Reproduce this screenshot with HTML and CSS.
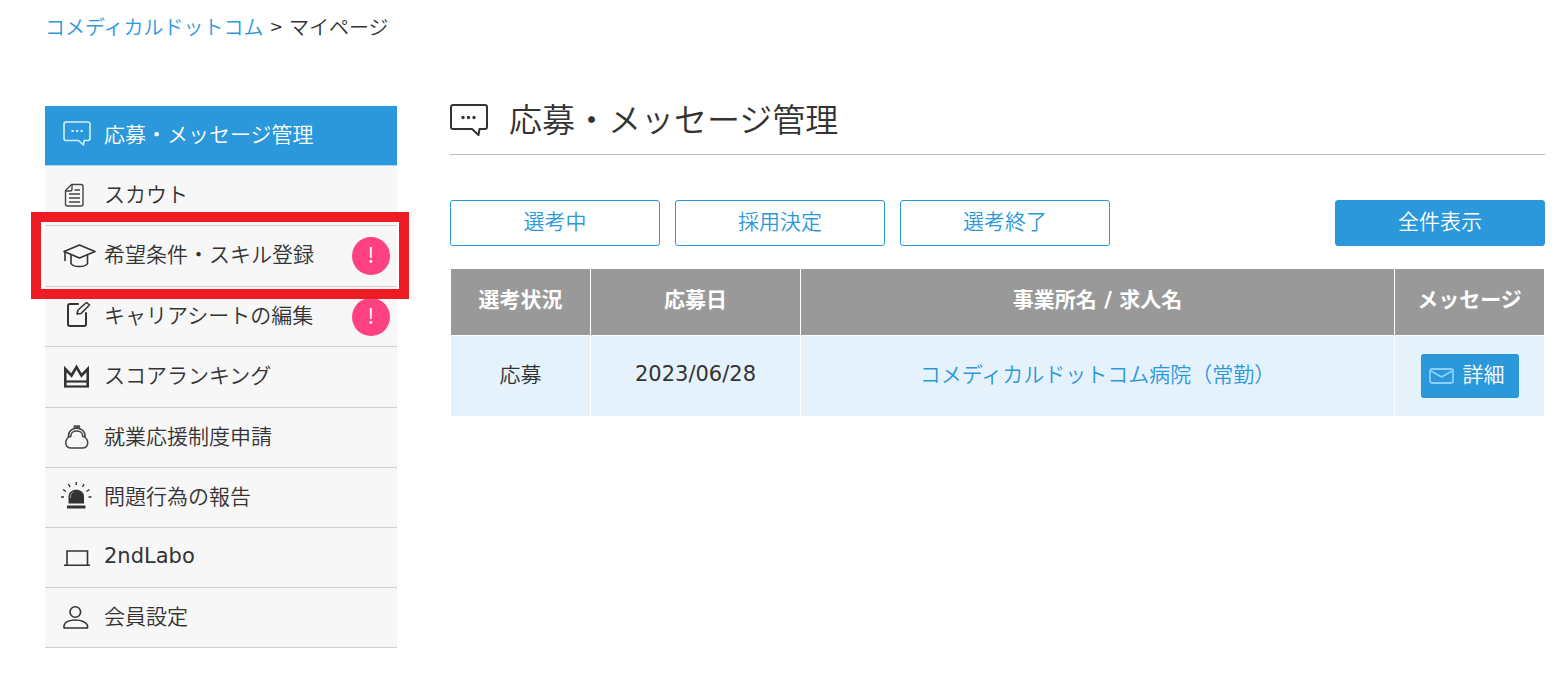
FILE: index.html
```html
<!DOCTYPE html>
<html lang="ja">
<head>
    <meta charset="UTF-8">
    <title>マイページ</title>
    <link rel="stylesheet" href="styles.css">
</head>
<body>
<nav class="breadcrumb">
    <a href="#">コメディカルドットコム</a>
    <span class="latin">&gt;</span>
    <span>マイページ</span>
</nav>
<div class="container">
    <nav class="sidebar">
        <ul class="menu">
            <li class="current">
                <a href="#">
                    <svg class="icon" viewBox="0 0 32 32" fill="none" stroke="#d3efff" stroke-width="1.6" stroke-linejoin="round">
                        <path d="M4 2H26a2 2 0 0 1 2 2V18.500a2 2 0 0 1-2 2H22L21.500 25L16.500 20.500H4a2 2 0 0 1-2-2V4a2 2 0 0 1 2-2Z"/>
                        <path d="M9.500 11h2.200M14 11h2.200M18.500 11h2.200" stroke-width="2.200"/>
                    </svg>
                    <span>応募・メッセージ管理</span>
                </a>
            </li>
            <li>
                <a href="#">
                    <svg class="icon" viewBox="0 0 32 32" fill="none" stroke="#444" stroke-width="1.4" stroke-linejoin="round">
                        <path d="M9.500 4.500H19a2 2 0 0 1 2 2V24a2 2 0 0 1-2 2H5.500a2 2 0 0 1-2-2V10.500Z"/>
                        <path d="M10 4.500V9a2 2 0 0 1-2 2H3.500M12.500 10H18M7 14H18M7 18H18M7 22H18"/>
                    </svg>
                    <span>スカウト</span>
                </a>
            </li>
            <li class="focus">
                <a href="#">
                    <svg class="icon" viewBox="0 0 32 32" fill="none" stroke="#333" stroke-width="1.6" stroke-linejoin="round" stroke-linecap="round">
                        <path d="M2 11.500L17.500 5L33 11.500L17.500 18Z"/>
                        <path d="M9 15V23.500C11 27.500 23.500 27.500 25.500 23.500V15M3 12V20.500"/>
                    </svg>
                    <span>希望条件・スキル登録</span>
                    <em class="badge">!</em>
                </a>
            </li>
            <li>
                <a href="#">
                    <svg class="icon" viewBox="0 0 32 32" fill="none" stroke="#333" stroke-width="2" stroke-linejoin="round" stroke-linecap="round">
                        <path d="M16 3H8a2 2 0 0 0-2 2V23a2 2 0 0 0 2 2H22a2 2 0 0 0 2-2V12"/>
                        <path d="M15 13l1-4L24.500 1.500L27.500 4L19 12.500Z" stroke-width="1.600"/>
                    </svg>
                    <span>キャリアシートの編集</span>
                    <em class="badge">!</em>
                </a>
            </li>
            <li class="ranking">
                <a href="#">
                    <svg class="icon" viewBox="0 0 32 32" fill="none" stroke="#333" stroke-width="2.600">
                        <path d="M3.300 26V8L9.500 14.500L14.500 6L19.500 14.500L25.700 8V26"/>
                        <path d="M2 20.500H27" stroke-width="2.200"/>
                        <path d="M2 25.500H27" stroke-width="2.200"/>
                    </svg>
                    <span>スコアランキング</span>
                </a>
            </li>
            <li>
                <a href="#">
                    <svg class="icon" viewBox="0 0 32 32" fill="none" stroke="#444" stroke-width="1.500" stroke-linecap="round">
                        <path d="M7 14.500C2 19 3 26 9 26H20.500C26.500 26 27.500 19 22.500 14.500"/>
                        <path d="M6.500 14.500C5.500 3.500 24 3.500 23 14.500M9 13.500C9 7.500 20.500 7.500 20.500 13.500M6.500 14.500Q9 15.500 9 13.500M23 14.500Q20.500 15.500 20.500 13.500"/>
                        <circle cx="13.400" cy="5" r="1.200"/>
                        <circle cx="16.400" cy="5" r="1.200"/>
                    </svg>
                    <span>就業応援制度申請</span>
                </a>
            </li>
            <li>
                <a href="#">
                    <svg class="icon" viewBox="0 0 32 32" fill="none" stroke="#333" stroke-width="1.400">
                        <path d="M6.500 21.500V14.500C6.500 5.500 22 5.500 22 14.500V21.500Z" fill="#333" stroke="none"/>
                        <path d="M5 23.500H23.500V26.500H5Z" fill="#333" stroke="none"/>
                        <path d="M8.500 16c0-4 1-5 3-6" stroke="#aaa" stroke-width="1"/>
                        <path d="M-1 15H2M26.500 15H29.500M1 7.500l3 2M27.500 7.500l-3 2M6.500 2l1.500 3M22 2L20.500 5M14.300 0V3"/>
                    </svg>
                    <span>問題行為の報告</span>
                </a>
            </li>
            <li>
                <a href="#">
                    <svg class="icon" viewBox="0 0 32 32" fill="none" stroke="#333" stroke-width="1.600">
                        <path d="M5 23V9H25.500V23M2 23.300H28"/>
                    </svg>
                    <span class="latin">2ndLabo</span>
                </a>
            </li>
            <li>
                <a href="#">
                    <svg class="icon" viewBox="0 0 32 32" fill="none" stroke="#333" stroke-width="1.600" stroke-linejoin="round">
                        <circle cx="13.300" cy="10" r="5.300"/>
                        <path d="M2 26V23.500C3 20 8 18 13.500 18S24.500 20 25.500 23.500V26Z"/>
                    </svg>
                    <span>会員設定</span>
                </a>
            </li>
        </ul>
    </nav>
    <main class="main">
        <h1 class="title">
            <svg class="title-icon" viewBox="0 0 40 36" fill="none" stroke="#333" stroke-width="2" stroke-linejoin="round">
                <path d="M3 3H35a2 2 0 0 1 2 2V25a2 2 0 0 1-2 2H29.500L28.500 33L22 27H3a2 2 0 0 1-2-2V5a2 2 0 0 1 2-2Z"/>
                <path d="M13 15.500h.01M18.500 15.500h.01M24 15.500h.01" stroke-width="3.400" stroke-linecap="round"/>
            </svg>
            <span>応募・メッセージ管理</span>
        </h1>
        <div class="filter">
            <button type="button">選考中</button>
            <button type="button">採用決定</button>
            <button type="button">選考終了</button>
            <button type="button" class="all">全件表示</button>
        </div>
        <table class="list">
            <thead>
            <tr>
                <th class="status">選考状況</th>
                <th class="date">応募日</th>
                <th>事業所名 / 求人名</th>
                <th class="message">メッセージ</th>
            </tr>
            </thead>
            <tbody>
            <tr>
                <td>応募</td>
                <td><span class="latin">2023/06/28</span></td>
                <td><a href="#">コメディカルドットコム病院（常勤）</a></td>
                <td class="action">
                    <a href="#" class="detail">
                        <svg class="mail" viewBox="0 0 26 18" fill="none" stroke="#8dcffa" stroke-width="1.800" stroke-linejoin="round">
                            <rect x="1" y="2" width="23" height="14" rx="2"/>
                            <path d="M2 4L12.500 10L23 4"/>
                        </svg>
                        <span>詳細</span>
                    </a>
                </td>
            </tr>
            </tbody>
        </table>
    </main>
</div>
</body>
</html>
```
FILE: styles.css
```css
*{
    margin: 0;
    padding: 0;
    box-sizing: border-box;
}
body{
    padding: 12px 18px 28px 45px;
    font-family: "Noto Sans CJK JP", sans-serif;
    font-size: 21px;
    font-weight: 350;
    line-height: 30px;
    color: #333;
    background: #fff;
}
a{
    color: #2b98dc;
    text-decoration: none;
}
.latin{
    font-family: "DejaVu Sans", sans-serif;
    font-weight: 400;
}
.breadcrumb{
    display: flex;
    gap: 6px;
    font-size: 20px;
}
.breadcrumb .latin{
    font-size: 16px;
}
.container{
    display: flex;
    align-items: flex-start;
    gap: 53px;
    margin-top: 64px;
}
.sidebar{
    flex: 0 0 352px;
}
.menu{
    list-style: none;
}
.menu li{
    position: relative;
    background: #f7f7f7;
    border-bottom: 1px solid #d0d0d0;
}
.menu a{
    display: flex;
    align-items: center;
    gap: 10px;
    height: 59px;
    padding: 0 7px 0 17px;
    color: #333;
}
.menu .focus a, .menu .ranking a{
    height: 60px;
}
.menu span{
    padding-bottom: 6px;
}
.menu .latin{
    padding-bottom: 4px;
}
.menu .current{
    background: #2b98dc;
    border-bottom-color: #a8dcff;
}
.menu .current a{
    color: #fff;
}
.icon{
    flex: none;
    width: 32px;
    height: 32px;
    overflow: visible;
}
.badge{
    width: 38px;
    height: 38px;
    margin-left: auto;
    line-height: 34px;
    font-style: normal;
    font-weight: 400;
    text-align: center;
    color: #fff;
    background: #ff4081;
    border-radius: 50%;
}
/* 強調用の赤枠 */
.focus::after{
    content: "";
    position: absolute;
    z-index: 1;
    top: -14px;
    right: -12px;
    bottom: -13px;
    left: -14px;
    border: 10px solid #ed1c24;
    pointer-events: none;
}
.main{
    flex: 1;
    min-width: 0;
}
.title{
    display: flex;
    align-items: center;
    gap: 19px;
    height: 49px;
    padding-bottom: 20px;
    font-size: 33px;
    font-weight: 350;
    line-height: 48px;
    border-bottom: 1px solid #bbb;
}
.title span{
    padding-bottom: 4px;
}
.title-icon{
    width: 40px;
    height: 36px;
}
.filter{
    display: flex;
    gap: 15px;
    margin-top: 45px;
}
.filter button{
    width: 210px;
    height: 46px;
    padding-bottom: 6px;
    font: inherit;
    color: #2b98dc;
    background: #fff;
    border: 1px solid #2b98dc;
    border-radius: 3px;
}
.filter .all{
    margin-left: auto;
    color: #fff;
    background: #2b98dc;
}
.list{
    width: 100%;
    margin-top: 22px;
    border-spacing: 1px;
    table-layout: fixed;
    text-align: center;
}
.list th{
    height: 66px;
    padding-bottom: 4px;
    font-family: "DejaVu Sans", "Noto Sans CJK JP", sans-serif;
    color: #fff;
    background: #999;
}
.list td{
    height: 80px;
    padding-bottom: 6px;
    background: #e5f2fb;
}
.list .action{
    padding-bottom: 0;
}
.status{
    width: 139px;
}
.date{
    width: 209px;
}
.message{
    width: 149px;
}
.detail{
    display: inline-flex;
    align-items: center;
    gap: 8px;
    height: 44px;
    padding: 0 14px 0 8px;
    vertical-align: middle;
    color: #fff;
    background: #2b98dc;
    border-radius: 3px;
}
.detail span{
    padding-bottom: 6px;
}
.mail{
    width: 26px;
    height: 18px;
}
```
